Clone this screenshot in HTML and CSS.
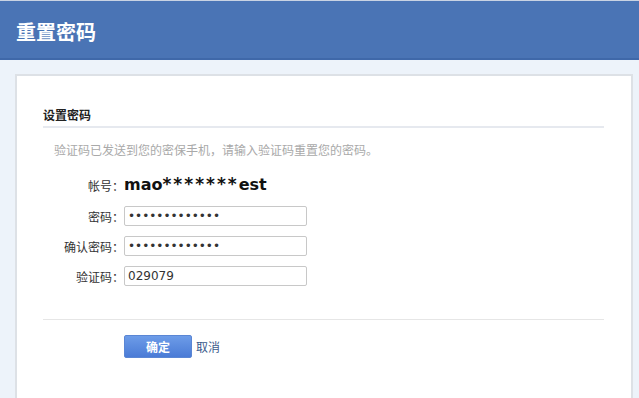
FILE: index.html
```html
<!DOCTYPE html>
<html>
<head>
    <meta charset="utf-8">
    <title>重置密码</title>
    <link rel="stylesheet" href="styles.css">
</head>
<body>
    <div class="top-bar">
        <h1>重置密码</h1>
    </div>

    <div class="main">
        <div class="panel">
            <h2>设置密码</h2>
            <p class="tip">验证码已发送到您的密保手机，请输入验证码重置您的密码。</p>

            <form class="reset-form">
                <div class="form-row account-row">
                    <label>帐号：</label>
                    <span class="account">mao<span class="mask">*******</span>est</span>
                </div>
                <div class="form-row">
                    <label for="pwd">密码：</label>
                    <input type="password" id="pwd" value="abcdefghijklm">
                </div>
                <div class="form-row">
                    <label for="pwd2">确认密码：</label>
                    <input type="password" id="pwd2" value="abcdefghijklm">
                </div>
                <div class="form-row">
                    <label for="code">验证码：</label>
                    <input type="text" id="code" value="029079">
                </div>

                <div class="actions">
                    <button type="button" class="btn-ok">确定</button>
                    <a href="#" class="cancel">取消</a>
                </div>
            </form>
        </div>
    </div>
</body>
</html>
```

FILE: styles.css
```css
body {
  margin: 0;
  padding: 0;
  background-color: #edf3fa;
  font-family: "DejaVu Sans", "Noto Sans CJK SC", sans-serif;
  font-size: 12px;
  color: #333;
}

.top-bar {
  height: 57px;
  background-color: #4a74b5;
  border-top: 1px solid #c9d3e3;
  border-bottom: 2px solid #3f68a9;
}

.top-bar h1 {
  margin: 0;
  padding: 20px 0 0 16px;
  font-family: "Noto Sans CJK SC", sans-serif;
  font-size: 20px;
  line-height: 22px;
  font-weight: bold;
  color: #fff;
}

.main {
  padding: 14px 6px 0 15px;
}

.panel {
  height: 340px;
  background-color: #fff;
  border: 2px solid #dde1e6;
  border-bottom: none;
  padding: 0 27px 0 26px;
}

.panel h2 {
  margin: 0;
  padding-top: 31px;
  padding-bottom: 3px;
  font-family: "Noto Sans CJK SC", sans-serif;
  font-size: 12px;
  line-height: 16px;
  font-weight: bold;
  color: #222;
  border-bottom: 2px solid #e6e9ef;
}

.tip {
  margin: 14px 0 0 11px;
  font-family: "Noto Sans CJK SC", sans-serif;
  font-size: 12px;
  line-height: 16px;
  color: #a9a9a9;
}

.reset-form {
  margin-top: 10px;
}

.form-row {
  display: flex;
  align-items: center;
  height: 30px;
}

.form-row label {
  width: 81px;
  text-align: right;
  font-family: "Noto Sans CJK SC", sans-serif;
  font-size: 12px;
  color: #333;
}

.account-row {
  height: 34px;
  margin-bottom: -1px;
}

.account {
  font-family: "DejaVu Sans", sans-serif;
  font-size: 16px;
  font-weight: bold;
  color: #111;
  position: relative;
  top: -1px;
}

.account .mask {
  font-size: 17px;
  letter-spacing: 2px;
}

.form-row input {
  width: 175px;
  height: 18px;
  padding: 0 3px;
  border: 1px solid #c8c8c8;
  border-radius: 2px;
  font-family: "DejaVu Sans", sans-serif;
  font-size: 12px;
  color: #333;
  outline: none;
}

.actions {
  display: flex;
  align-items: center;
  margin-top: 28px;
  padding-top: 15px;
  padding-left: 81px;
  border-top: 1px solid #e6e6e6;
}

.btn-ok {
  width: 68px;
  height: 23px;
  padding: 0;
  border: 1px solid #5a86d4;
  border-radius: 2px;
  background: linear-gradient(#6d9ce8, #4a7bd6);
  color: #fff;
  font-family: "Noto Sans CJK SC", sans-serif;
  font-size: 12px;
  font-weight: bold;
  cursor: pointer;
}

.cancel {
  margin-left: 4px;
  font-family: "Noto Sans CJK SC", sans-serif;
  font-size: 12px;
  color: #3a5a8c;
  text-decoration: none;
}
```
